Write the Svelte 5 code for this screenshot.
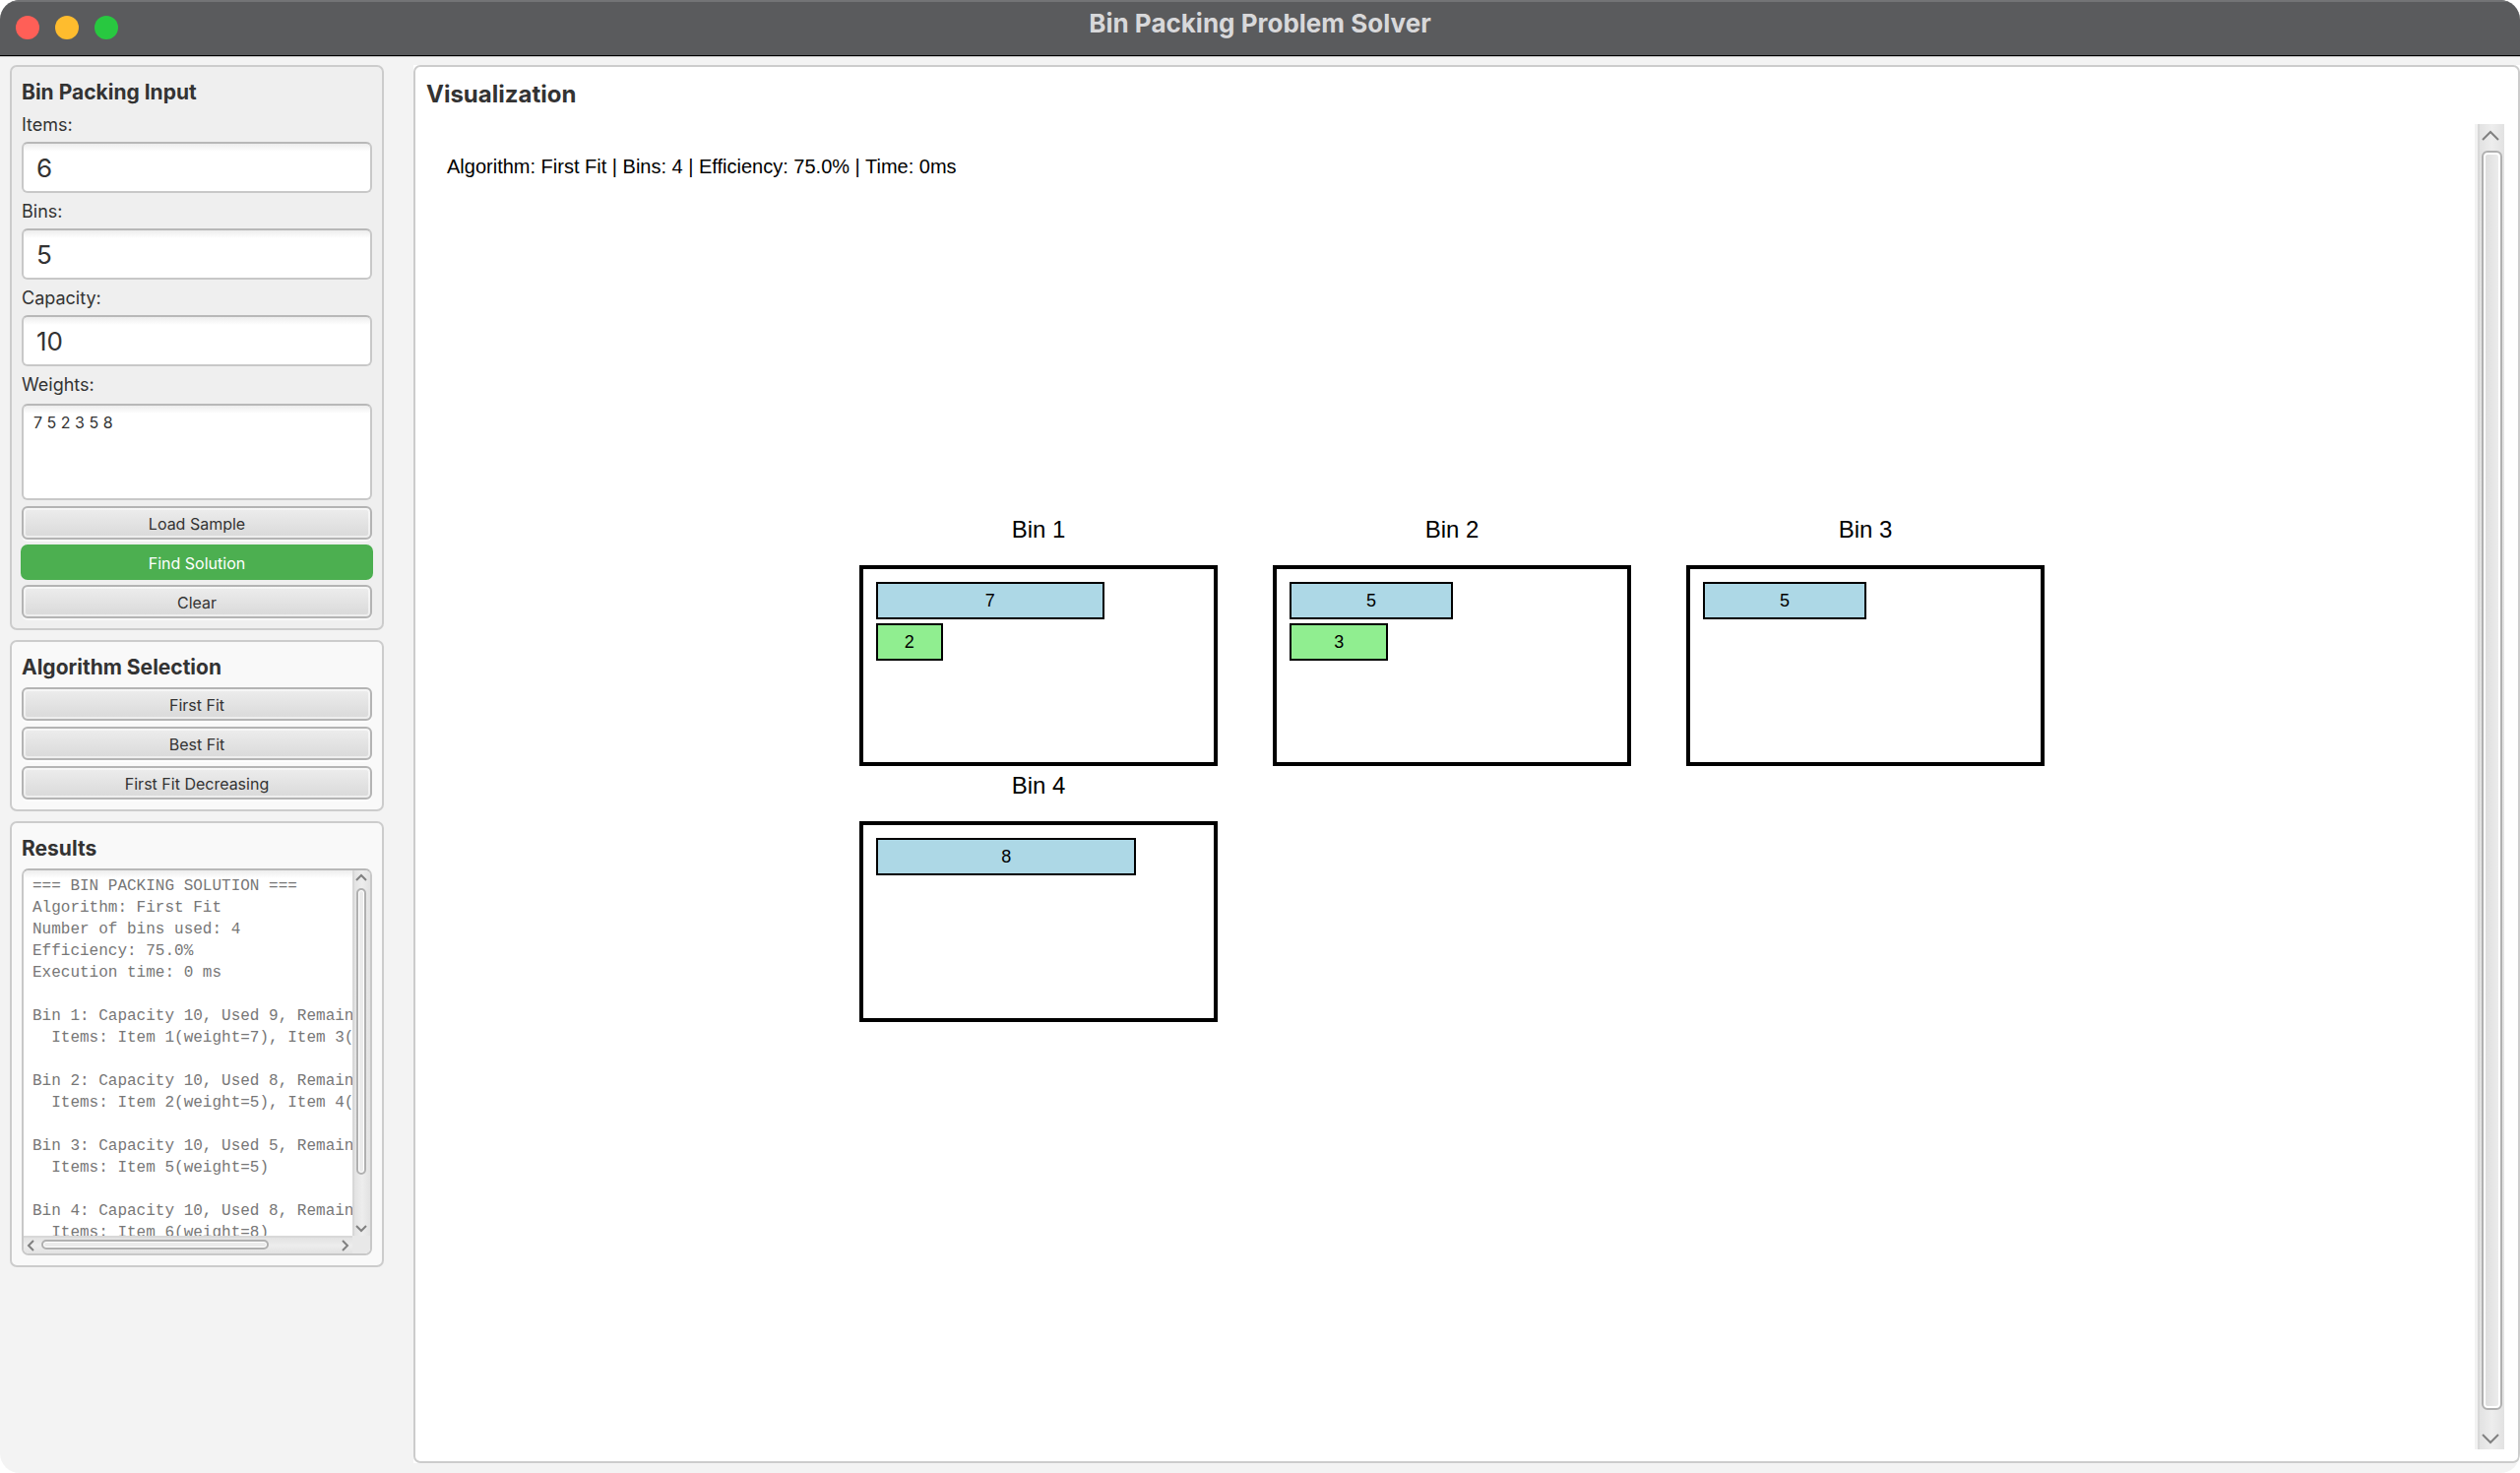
<script>
  let items = $state('6');
  let bins = $state('5');
  let capacity = $state('10');
  let weights = $state('7 5 2 3 5 8');

  const packed = [[7, 2], [5, 3], [5], [8]];

  const results = `=== BIN PACKING SOLUTION ===
Algorithm: First Fit
Number of bins used: 4
Efficiency: 75.0%
Execution time: 0 ms

Bin 1: Capacity 10, Used 9, Remaining 1
  Items: Item 1(weight=7), Item 3(weight=2)

Bin 2: Capacity 10, Used 8, Remaining 2
  Items: Item 2(weight=5), Item 4(weight=3)

Bin 3: Capacity 10, Used 5, Remaining 5
  Items: Item 5(weight=5)

Bin 4: Capacity 10, Used 8, Remaining 2
  Items: Item 6(weight=8)
`;

  function clear() {
    items = bins = capacity = weights = '';
  }
  function loadSample() {
    items = '6';
    bins = '5';
    capacity = '10';
    weights = '7 5 2 3 5 8';
  }
</script>

{#snippet arrow(label, d)}
  <button class="arrow" type="button" aria-label={label}>
    <svg viewBox="0 0 18 18" aria-hidden="true"><path {d} /></svg>
  </button>
{/snippet}

<div class="window">
  <header class="titlebar">
    <div class="lights">
      <button class="light close" type="button" aria-label="Close"></button>
      <button class="light minimize" type="button" aria-label="Minimize"></button>
      <button class="light zoom" type="button" aria-label="Zoom"></button>
    </div>
    <h1>Bin Packing Problem Solver</h1>
    <div></div>
  </header>

  <div class="body">
    <aside>
      <section class="panel input-panel">
        <h2>Bin Packing Input</h2>
        <label for="items">Items:</label>
        <input id="items" type="text" bind:value={items} />
        <label for="bins">Bins:</label>
        <input id="bins" type="text" bind:value={bins} />
        <label for="capacity">Capacity:</label>
        <input id="capacity" type="text" bind:value={capacity} />
        <label for="weights">Weights:</label>
        <textarea id="weights" class="weights" bind:value={weights}></textarea>
        <button class="btn" type="button" onclick={loadSample}>Load Sample</button>
        <button class="btn primary" type="button">Find Solution</button>
        <button class="btn" type="button" onclick={clear}>Clear</button>
      </section>

      <section class="panel">
        <h2>Algorithm Selection</h2>
        <button class="btn" type="button">First Fit</button>
        <button class="btn" type="button">Best Fit</button>
        <button class="btn" type="button">First Fit Decreasing</button>
      </section>

      <section class="panel">
        <h2 id="results-title">Results</h2>
        <div class="results">
          <textarea readonly wrap="off" aria-labelledby="results-title" value={results}></textarea>
          <div class="bar vertical small">
            {@render arrow('Scroll results up', 'M4 10 L9 5 L14 10')}
            <div class="track"><div class="thumb" style:flex-grow="290"></div><div style:flex-grow="45"></div></div>
            {@render arrow('Scroll results down', 'M4 8 L9 13 L14 8')}
          </div>
          <div class="bar horizontal small">
            {@render arrow('Scroll results left', 'M10 4 L5 9 L10 14')}
            <div class="track"><div class="thumb" style:flex-grow="230"></div><div style:flex-grow="68"></div></div>
            {@render arrow('Scroll results right', 'M8 4 L13 9 L8 14')}
          </div>
          <div class="corner"></div>
        </div>
      </section>
    </aside>

    <main>
      <div class="viz">
        <h2>Visualization</h2>
        <div class="scroller">
          <div class="canvas">
            <p>Algorithm: First Fit | Bins: 4 | Efficiency: 75.0% | Time: 0ms</p>
            <div class="bins">
              {#each packed as contents, i}
                <figure>
                  <figcaption>Bin {i + 1}</figcaption>
                  <div class="bin">
                    {#each contents as weight, j}
                      <div class="item" class:green={j % 2 === 1} style:--w={weight}>{weight}</div>
                    {/each}
                  </div>
                </figure>
              {/each}
            </div>
          </div>
          <div class="bar vertical large">
            {@render arrow('Scroll up', 'M1 13 L9 5 L17 13')}
            <div class="track"><div class="thumb" style:flex-grow="1"></div></div>
            {@render arrow('Scroll down', 'M1 5 L9 13 L17 5')}
          </div>
        </div>
      </div>
    </main>
  </div>
</div>

<style>
  :global(body) {
    margin: 0;
    background: #fff;
  }
  * {
    box-sizing: border-box;
  }
  .window {
    display: flex;
    flex-direction: column;
    min-height: 100vh;
    overflow: hidden;
    border-radius: 20px;
    background: #f3f3f3;
    color: #333;
    font-family: Inter, 'Liberation Sans', sans-serif;
    font-size: 18px;
  }
  h1, h2, p, figure {
    margin: 0;
  }
  button {
    padding: 0;
    border: 0;
    font: inherit;
    color: inherit;
  }

  .titlebar {
    display: grid;
    grid-template-columns: 1fr auto 1fr;
    align-items: start;
    height: 57px;
    border-top: 2px solid #737476;
    border-bottom: 1px solid #000;
    background: #5a5b5d;
    box-shadow: 0 1px #c4c4c4;
  }
  .lights {
    display: flex;
    gap: 16px;
    padding: 14px 16px;
  }
  .light {
    width: 24px;
    height: 24px;
    border-radius: 50%;
  }
  .close { background: #ff5f57; }
  .minimize { background: #febc2e; }
  .zoom { background: #28c840; }
  h1 {
    padding-top: 6px;
    font-size: 26px;
    line-height: 32px;
    font-weight: 700;
    color: #d8d8da;
  }

  .body {
    display: flex;
    flex: 1;
    gap: 30px;
    padding: 9px 0 10px 10px;
  }
  aside {
    display: flex;
    flex-direction: column;
    flex: none;
    gap: 10px;
    width: 380px;
  }
  .panel {
    display: flex;
    flex-direction: column;
    gap: 6px;
    padding: 10px;
    border: 2px solid #ccc;
    border-radius: 7px;
    background: #f9f9f9;
  }
  .input-panel {
    background: #efefef;
  }
  h2 {
    font-size: 21px;
    line-height: 32px;
    height: 30px;
    font-weight: 700;
  }
  label {
    height: 24px;
    line-height: 26px;
  }
  input,
  .weights {
    border: 2px solid #c8c8c8;
    border-top-color: #b8b8b8;
    border-radius: 6px;
    background: linear-gradient(#ededed, #fff 8px);
    font: inherit;
    color: inherit;
    outline: none;
  }
  input {
    width: 100%;
    height: 52px;
    padding: 0 13px;
    font-size: 26px;
  }
  .weights {
    height: 98px;
    margin-top: 2px;
    padding: 6px 10px;
    resize: none;
    font-size: 16px;
    line-height: 22px;
  }
  .btn {
    height: 34px;
    padding-top: 2px;
    border: 2px solid #b4b4b4;
    border-radius: 6px;
    background: linear-gradient(#ededed, #d9d9d9);
    box-shadow: inset 0 0 0 2px rgb(255 255 255 / 55%), 0 2px rgb(255 255 255 / 60%);
    font-size: 16px;
    line-height: 28px;
  }
  .primary {
    border-color: #4caf50;
    background: #4caf50;
    box-shadow: 0 0 0 1px #4caf50;
    color: #fff;
  }

  .results {
    display: grid;
    grid-template: 371px 18px / 1fr 18px;
    overflow: hidden;
    border: 2px solid #c8c8c8;
    border-top-color: #b8b8b8;
    border-radius: 7px;
    background: #fff;
  }
  .results textarea {
    width: 100%;
    height: 100%;
    padding: 5px 0 0 9px;
    border: 0;
    overflow: hidden;
    resize: none;
    background: linear-gradient(#ededed, #fff 8px);
    font: 16px/22px 'Liberation Mono', monospace;
    white-space: pre;
    color: #777;
    outline: none;
  }
  .corner {
    background: #e8e8e8;
  }

  .bar {
    display: flex;
    background: #e8e8e8;
  }
  .bar.vertical {
    flex-direction: column;
    border-left: 2px solid #d8d8d8;
    background: linear-gradient(90deg, #e2e2e2, #ededed 50%, #e2e2e2);
  }
  .bar.horizontal {
    border-top: 2px solid #d8d8d8;
    background: linear-gradient(#e2e2e2, #ededed 50%, #e2e2e2);
  }
  .track {
    display: flex;
    flex: 1;
  }
  .vertical > .track {
    flex-direction: column;
  }
  .thumb {
    border: 2px solid #b0b0b0;
    border-radius: 6px;
    background: #ebebeb;
    box-shadow: inset 0 0 0 1px #fff;
  }
  .arrow {
    display: flex;
    align-items: center;
    justify-content: center;
    background: none;
  }
  .arrow svg {
    flex: none;
    width: 18px;
    height: 18px;
    fill: none;
    stroke: #808080;
    stroke-width: 2;
  }
  .small.vertical .arrow {
    height: 18px;
    padding-right: 2px;
  }
  .small.vertical .track { padding: 0 4px 0 2px; }
  .small.horizontal .arrow { width: 18px; }
  .small.horizontal .track { padding: 2px 0 4px; }
  .large.vertical {
    width: 27px;
    box-shadow: -3px 0 #f2f2f2;
  }
  .large .arrow {
    height: 27px;
    padding: 0 3px 3px 0;
  }
  .large .track { padding: 0 2px; }
  .large .thumb {
    background: linear-gradient(90deg, #dcdcdc, #eee);
    box-shadow: inset 0 0 0 2px #fff;
  }
  .large .arrow:last-child {
    height: 40px;
    padding: 17px 3px 0 0;
  }

  main {
    display: flex;
    flex: 1;
    min-width: 0;
    background: #fff;
  }
  .viz {
    display: flex;
    flex: 1;
    flex-direction: column;
    gap: 12px;
    min-width: 0;
    padding: 10px 14px 12px 11px;
    border: 2px solid #ccc;
    border-radius: 7px;
  }
  .viz h2 {
    height: 36px;
    font-size: 24px;
    line-height: 36px;
  }
  .scroller {
    display: flex;
    flex: 1;
  }
  .canvas {
    flex: 1;
    min-width: 0;
    color: #000;
    font-family: 'Liberation Sans', Arial, sans-serif;
  }
  .canvas p {
    padding: 31px 21px 0;
    font-size: 20px;
    line-height: 24px;
  }
  .bins {
    display: grid;
    grid-template-columns: repeat(3, 364px);
    justify-content: center;
    gap: 6px 56px;
    padding-top: 343px;
  }
  figcaption {
    padding-bottom: 22px;
    font-size: 24px;
    line-height: 28px;
    text-align: center;
  }
  .bin {
    display: flex;
    flex-direction: column;
    gap: 4px;
    height: 204px;
    padding: 13px 15px 0 13px;
    border: 4px solid #000;
  }
  .item {
    width: calc(var(--w) * 10% + 2px);
    height: 38px;
    border: 2px solid #000;
    background: #add8e6;
    font-size: 18px;
    line-height: 34px;
    text-align: center;
  }
  .green {
    background: #90ee90;
  }
</style>
